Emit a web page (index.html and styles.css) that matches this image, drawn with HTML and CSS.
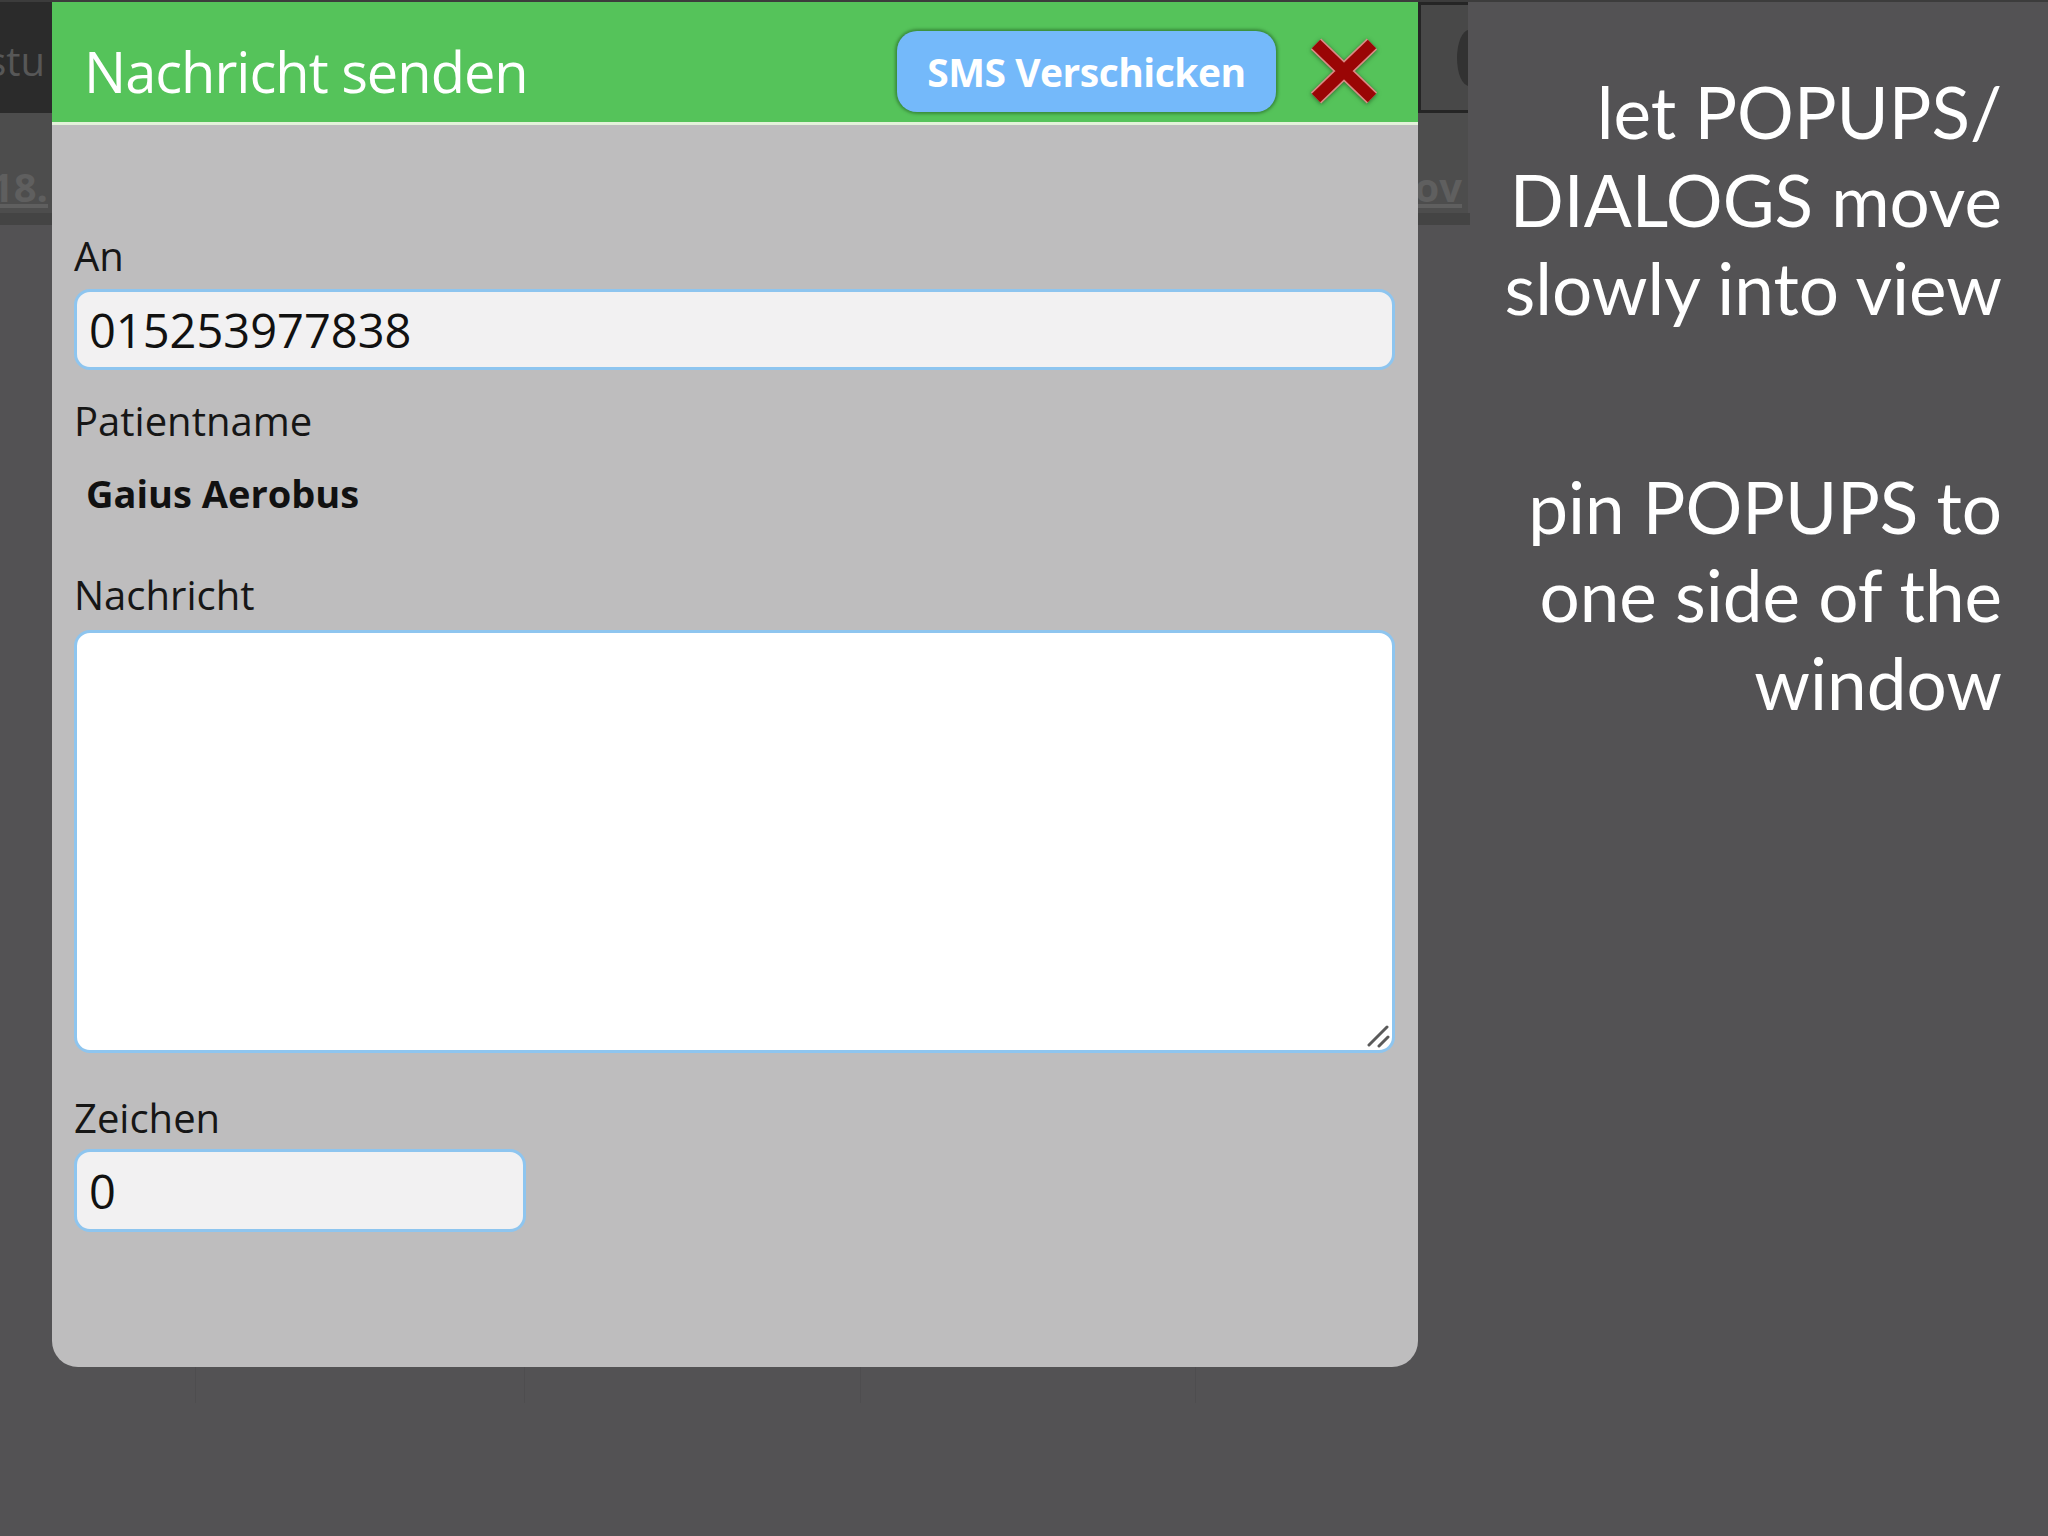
FILE: index.html
```html
<!DOCTYPE html>
<html lang="de">
<head>
<meta charset="utf-8">
<title>Nachricht senden</title>
<link rel="stylesheet" href="styles.css">
</head>
<body>
<div class="stage">
  <div class="app">
    <div class="app-main">
      <aside class="strip strip-left">
        <div class="strip-top"><span class="ghost">stu</span></div>
        <div class="strip-row"><span class="ghost link">18.</span></div>
        <div class="strip-band"></div>
      </aside>

      <section class="dialog">
        <header class="dlg-head">
          <h1 class="dlg-title">Nachricht senden</h1>
          <button class="btn-send" type="button">SMS Verschicken</button>
          <button class="btn-close" type="button" aria-label="Schließen">
            <svg viewBox="0 0 68 66" width="68" height="66">
              <g fill="none" stroke-linecap="butt">
                <path d="M6 6 L62 60 M62 6 L6 60" stroke="#d98b86" stroke-width="15"/>
                <path d="M6 6 L62 60 M62 6 L6 60" stroke="#9a0505" stroke-width="12"/>
              </g>
            </svg>
          </button>
        </header>
        <div class="dlg-body">
          <label class="field-label">An</label>
          <input class="field" type="text" value="015253977838" readonly>
          <label class="field-label lbl-name">Patientname</label>
          <div class="patient">Gaius Aerobus</div>
          <label class="field-label lbl-msg">Nachricht</label>
          <div class="area-wrap">
            <textarea class="field area"></textarea>
            <svg class="grip" viewBox="0 0 24 24" width="24" height="24">
              <path d="M3 21 L21 3 M13 22 L22 13" stroke="#5a5a5a" stroke-width="3" stroke-linecap="round" fill="none"/>
            </svg>
          </div>
          <label class="field-label lbl-count">Zeichen</label>
          <input class="field short" type="text" value="0" readonly>
        </div>
      </section>

      <aside class="strip strip-right">
        <div class="rs-top"><span class="rs-shape"></span></div>
        <div class="strip-row rs-row"><span class="ghost link">ov</span></div>
        <div class="strip-band"></div>
      </aside>
    </div>
    <div class="table-stub">
      <span></span><span></span><span></span><span></span><span></span>
    </div>
  </div>

  <div class="notes">
    <p>let POPUPS/<br>DIALOGS move<br>slowly into view</p>
    <p class="second">pin POPUPS to<br>one side of the<br>window</p>
  </div>
</div>
</body>
</html>
```

FILE: styles.css
```css
html, body {
  margin: 0;
  padding: 0;
}

body {
  width: 2048px;
  height: 1536px;
  overflow: hidden;
  background: #535254;
  font-family: "Open Sans", "Noto Sans", sans-serif;
}

.stage {
  display: flex;
  height: 1536px;
  border-top: 2px solid #3c3c3c;
  box-sizing: border-box;
}

.app {
  width: 1470px;
  flex: none;
  display: flex;
  flex-direction: column;
}

.app-main {
  display: flex;
  align-items: flex-start;
}

/* background app strips */
.strip {
  width: 52px;
  flex: none;
  overflow: hidden;
}

.strip-top {
  height: 111px;
  background: #2b2b2b;
  display: flex;
  justify-content: flex-end;
  align-items: flex-start;
  padding-right: 7px;
  box-sizing: border-box;
}

.strip-top .ghost {
  margin-top: 35px;
  font-size: 40px;
  line-height: 48px;
  color: #575757;
  white-space: nowrap;
}

.strip-row {
  height: 100px;
  background: #4d4d4d;
  display: flex;
  justify-content: flex-end;
  align-items: flex-start;
  padding-right: 4px;
  box-sizing: border-box;
}

.ghost.link {
  margin-top: 50px;
  font-size: 40px;
  line-height: 48px;
  font-weight: 700;
  color: #5f5f5f;
  text-decoration: underline;
  white-space: nowrap;
}

.strip-band {
  height: 12px;
  background: #444444;
}

.strip-right {
  width: 52px;
}

.rs-top {
  height: 111px;
  width: 50px;
  box-sizing: border-box;
  border: 3px solid #252525;
  border-right: none;
  background: #484848;
  display: flex;
  justify-content: flex-end;
  align-items: center;
  overflow: hidden;
}

.rs-shape {
  width: 24px;
  height: 56px;
  border-radius: 50%;
  background: #323232;
  margin-right: -13px;
  flex: none;
}

.rs-row {
  width: 50px;
  justify-content: flex-end;
  padding-right: 6px;
}

.table-stub {
  display: grid;
  grid-template-columns: 196px 329px 336px 335px 1fr;
  height: 36px;
}

.table-stub span {
  border-right: 1px solid rgba(0, 0, 0, 0.05);
}

.table-stub span:last-child {
  border-right: none;
}

/* dialog */
.dialog {
  width: 1366px;
  height: 1365px;
  flex: none;
  background: #bebdbe;
  border-radius: 0 0 26px 26px;
  display: flex;
  flex-direction: column;
}

.dlg-head {
  height: 123px;
  box-sizing: border-box;
  background: #55c35a;
  border-bottom: 3px solid #e3f2da;
  display: flex;
  align-items: center;
  padding: 18px 40px 0 32px;
}

.dlg-title {
  flex: 1;
  margin: 0;
  font-size: 56px;
  line-height: 1;
  font-weight: 400;
  color: #ffffff;
  letter-spacing: -1px;
  white-space: nowrap;
}

.btn-send {
  width: 379px;
  height: 81px;
  border: none;
  border-radius: 20px;
  background: #74b9fa;
  color: #ffffff;
  font-family: "Open Sans", "Noto Sans", sans-serif;
  font-size: 39px;
  font-weight: 700;
  letter-spacing: -0.5px;
  box-shadow: 0 0 3px 2px rgba(35, 95, 35, 0.55);
  padding: 0;
  cursor: pointer;
}

.btn-close {
  margin-left: 34px;
  width: 68px;
  height: 66px;
  padding: 0;
  border: none;
  background: none;
  display: flex;
  filter: drop-shadow(0 1px 2px rgba(20, 60, 20, 0.6));
}

.dlg-body {
  padding: 107px 23px 0 22px;
  display: flex;
  flex-direction: column;
  align-items: flex-start;
}

.field-label {
  display: block;
  font-size: 40px;
  line-height: 48px;
  color: #161616;
}

.lbl-name { margin-top: 27px; }
.lbl-msg { margin-top: 54px; }
.lbl-count { margin-top: 41px; }

.field {
  display: block;
  box-sizing: border-box;
  width: 100%;
  height: 81px;
  margin-top: 9px;
  border: 3px solid #8ec5ef;
  border-radius: 16px;
  background: #f2f1f2;
  font-family: "Open Sans", "Noto Sans", sans-serif;
  font-size: 47px;
  color: #111111;
  padding: 0 12px;
  outline: none;
}

.patient {
  margin-top: 24px;
  padding-left: 12px;
  font-size: 38px;
  line-height: 48px;
  font-weight: 700;
  color: #111111;
}

.area-wrap {
  position: relative;
  width: 100%;
  margin-top: 11px;
}

.area {
  height: 423px;
  margin-top: 0;
  background: #ffffff;
  resize: none;
}

.grip {
  position: absolute;
  right: 5px;
  bottom: 5px;
}

.field.short {
  width: 452px;
  height: 83px;
  margin-top: 7px;
}

/* slide notes */
.notes {
  flex: 1;
  padding: 66px 46px 0 0;
  color: #ffffff;
  font-family: "Lato", "Open Sans", sans-serif;
  font-size: 71px;
  line-height: 88px;
  text-align: right;
  white-space: nowrap;
}

.notes p {
  margin: 0;
}

.notes .second {
  margin-top: 131px;
}
```
